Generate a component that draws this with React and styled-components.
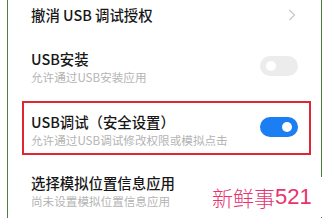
import React from "react";
import styled, { createGlobalStyle } from "styled-components";

const GlobalStyle = createGlobalStyle`
  html, body {
    margin: 0;
    padding: 0;
    background: #ffffff;
  }
  body {
    font-family: "Noto Sans CJK SC", "Noto Sans", sans-serif;
  }
`;

const Page = styled.div`
  position: relative;
  width: 328px;
  height: 222px;
  overflow: hidden;
  background: #fff;
`;

const Frame = styled.div`
  margin-left: 7px;
  width: 313px;
  height: 218px;
  border-left: 1px solid #4f7f3f;
  border-right: 1px solid #4f7f3f;
  display: flex;
  flex-direction: column;
`;

const Row = styled.div`
  display: flex;
  align-items: ${(p) => (p.$center ? "center" : "flex-start")};
  justify-content: space-between;
  height: ${(p) => p.$h}px;
  box-sizing: border-box;
  padding: ${(p) => p.$pt}px 23px 0 23px;
`;

const Highlight = styled(Row)`
  margin: 0 10px 0 14px;
  border: 2px solid #e02630;
  padding: ${(p) => p.$pt}px 11px 0 7px;
`;

const TextBlock = styled.div`
  display: flex;
  flex-direction: column;
`;

const Title = styled.div`
  font-size: 14.4px;
  line-height: 18px;
  font-weight: 500;
  color: #171717;
  white-space: nowrap;
`;

const Sub = styled.div`
  font-size: 11.6px;
  line-height: 18px;
  color: #b4b4b4;
  white-space: nowrap;
`;

const Chevron = styled.svg`
  width: 8px;
  height: 12px;
  margin-right: 2px;
`;

const Switch = styled.div`
  width: 38px;
  height: 20px;
  border-radius: 10px;
  margin-top: ${(p) => p.$mt}px;
  background: ${(p) => (p.$on ? "#1b7ef2" : "#ececec")};
  display: flex;
  align-items: center;
  justify-content: ${(p) => (p.$on ? "flex-end" : "flex-start")};
  padding: 0 6px;
  box-sizing: border-box;
  flex-shrink: 0;
`;

const Knob = styled.div`
  width: 10px;
  height: 10px;
  border-radius: 50%;
  background: #ffffff;
`;

const Watermark = styled.div`
  position: absolute;
  left: 206px;
  top: 177px;
  width: 122px;
  height: 40px;
  background: #ffffff;
  display: flex;
  align-items: center;
  padding-left: 6px;
  box-sizing: border-box;
  color: #e8336e;
  white-space: nowrap;
`;

const WmHan = styled.span`
  font-family: "Noto Sans CJK SC", sans-serif;
  font-size: 21px;
  font-weight: 300;
`;

const WmNum = styled.span`
  font-family: "Liberation Sans", Arial, sans-serif;
  font-size: 22px;
`;

export default function App() {
  return (
    <Page>
      <GlobalStyle />
      <Frame>
        <Row $h={30} $pt={0} $center>
          <Title>撤消 USB 调试授权</Title>
          <Chevron viewBox="0 0 8 12">
            <path d="M1.5 1 L6.5 6 L1.5 11" fill="none" stroke="#c8c8c8" strokeWidth="1.2" />
          </Chevron>
        </Row>
        <Row $h={71} $pt={20}>
          <TextBlock>
            <Title>USB安装</Title>
            <Sub>允许通过USB安装应用</Sub>
          </TextBlock>
          <Switch $mt={6}>
            <Knob />
          </Switch>
        </Row>
        <Highlight $h={54} $pt={10}>
          <TextBlock>
            <Title>USB调试（安全设置）</Title>
            <Sub>允许通过USB调试修改权限或模拟点击</Sub>
          </TextBlock>
          <Switch $on $mt={4}>
            <Knob />
          </Switch>
        </Highlight>
        <Row $h={63} $pt={19}>
          <TextBlock>
            <Title>选择模拟位置信息应用</Title>
            <Sub>尚未设置模拟位置信息应用</Sub>
          </TextBlock>
        </Row>
      </Frame>
      <Watermark>
        <WmHan>新鲜事</WmHan>
        <WmNum>521</WmNum>
      </Watermark>
    </Page>
  );
}
